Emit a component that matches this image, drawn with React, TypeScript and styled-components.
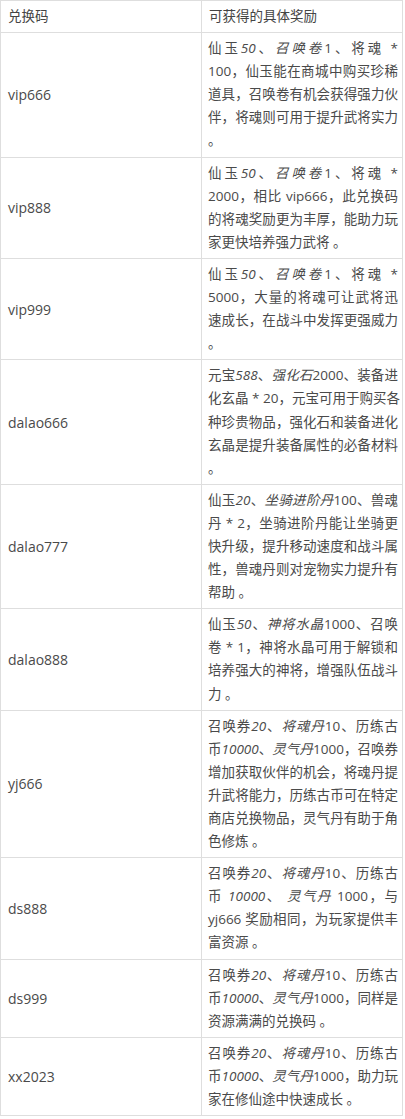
import React from 'react';
import styled, { createGlobalStyle } from 'styled-components';

// one text segment: plain string or [text] for italic
type Seg = string | [string];

interface Reward {
  code: string;
  lines: Seg[][];
}

const rewards: Reward[] = [
  {
    code: 'vip666',
    lines: [
      ['仙玉', ['50'], '、', ['召唤卷'], '1、将魂 *'],
      ['100，仙玉能在商城中购买珍稀'],
      ['道具，召唤卷有机会获得强力伙'],
      ['伴，将魂则可用于提升武将实力'],
      ['。'],
    ],
  },
  {
    code: 'vip888',
    lines: [
      ['仙玉', ['50'], '、', ['召唤卷'], '1、将魂 *'],
      ['2000，相比 vip666，此兑换码'],
      ['的将魂奖励更为丰厚，能助力玩'],
      ['家更快培养强力武将 。'],
    ],
  },
  {
    code: 'vip999',
    lines: [
      ['仙玉', ['50'], '、', ['召唤卷'], '1、将魂 *'],
      ['5000，大量的将魂可让武将迅'],
      ['速成长，在战斗中发挥更强威力'],
      ['。'],
    ],
  },
  {
    code: 'dalao666',
    lines: [
      ['元宝', ['588'], '、', ['强化石'], '2000、装备进'],
      ['化玄晶 * 20，元宝可用于购买各'],
      ['种珍贵物品，强化石和装备进化'],
      ['玄晶是提升装备属性的必备材料'],
      ['。'],
    ],
  },
  {
    code: 'dalao777',
    lines: [
      ['仙玉', ['20'], '、', ['坐骑进阶丹'], '100、兽魂'],
      ['丹 * 2，坐骑进阶丹能让坐骑更'],
      ['快升级，提升移动速度和战斗属'],
      ['性，兽魂丹则对宠物实力提升有'],
      ['帮助 。'],
    ],
  },
  {
    code: 'dalao888',
    lines: [
      ['仙玉', ['50'], '、', ['神将水晶'], '1000、召唤'],
      ['卷 * 1，神将水晶可用于解锁和'],
      ['培养强大的神将，增强队伍战斗'],
      ['力 。'],
    ],
  },
  {
    code: 'yj666',
    lines: [
      ['召唤券', ['20'], '、', ['将魂丹'], '10、历练古'],
      ['币', ['10000'], '、', ['灵气丹'], '1000，召唤券'],
      ['增加获取伙伴的机会，将魂丹提'],
      ['升武将能力，历练古币可在特定'],
      ['商店兑换物品，灵气丹有助于角'],
      ['色修炼 。'],
    ],
  },
  {
    code: 'ds888',
    lines: [
      ['召唤券', ['20'], '、', ['将魂丹'], '10、历练古'],
      ['币 ', ['10000'], '、 ', ['灵气丹'], ' 1000，与'],
      ['yj666 奖励相同，为玩家提供丰'],
      ['富资源 。'],
    ],
  },
  {
    code: 'ds999',
    lines: [
      ['召唤券', ['20'], '、', ['将魂丹'], '10、历练古'],
      ['币', ['10000'], '、', ['灵气丹'], '1000，同样是'],
      ['资源满满的兑换码 。'],
    ],
  },
  {
    code: 'xx2023',
    lines: [
      ['召唤券', ['20'], '、', ['将魂丹'], '10、历练古'],
      ['币', ['10000'], '、', ['灵气丹'], '1000，助力玩'],
      ['家在修仙途中快速成长 。'],
    ],
  },
];

const GlobalStyle = createGlobalStyle`
  html, body {
    margin: 0;
    padding: 0;
    background: #ffffff;
  }
  body {
    font-family: "Open Sans", "Noto Sans CJK SC", sans-serif;
  }
`;

const App: React.FC = () => {
  return (
    <>
      <GlobalStyle />
      <Table>
        <colgroup>
          <Col />
          <Col />
        </colgroup>
        <thead>
          <tr>
            <HeadCell>兑换码</HeadCell>
            <HeadCell>可获得的具体奖励</HeadCell>
          </tr>
        </thead>
        <tbody>
          {rewards.map((r) => (
            <tr key={r.code}>
              <CodeCell>{r.code}</CodeCell>
              <RewardCell>
                {r.lines.map((line, i) => (
                  <Line key={i} $last={i === r.lines.length - 1}>
                    {line.map((seg, j) =>
                      typeof seg === 'string' ? seg : <Em key={j}>{seg[0]}</Em>
                    )}
                  </Line>
                ))}
              </RewardCell>
            </tr>
          ))}
        </tbody>
      </Table>
    </>
  );
};

export default App;

const Table = styled.table`
  width: 403px;
  table-layout: fixed;
  border-collapse: collapse;
  font-size: 13.5px;
  color: #4a4a4a;
`;

const Col = styled.col`
  width: 50%;
`;

const HeadCell = styled.th`
  border: 1px solid #dedede;
  padding: 4px 6px 4px 7px;
  font-weight: normal;
  text-align: left;
  line-height: 23.1px;
  color: #444444;
`;

const CodeCell = styled.td`
  border: 1px solid #dedede;
  padding: 4px 6px 4px 7px;
  vertical-align: middle;
  line-height: 23.1px;
  font-size: 14px;
`;

const RewardCell = styled.td`
  border: 1px solid #dedede;
  padding: 4px 4px 4px 6px;
  vertical-align: middle;
`;

const Line = styled.div<{ $last: boolean }>`
  line-height: 23.1px;
  white-space: nowrap;
  text-align: ${(p) => (p.$last ? 'left' : 'justify')};
  text-align-last: ${(p) => (p.$last ? 'left' : 'justify')};
  text-justify: inter-character;
`;

const Em = styled.em`
  font-style: italic;
`;
